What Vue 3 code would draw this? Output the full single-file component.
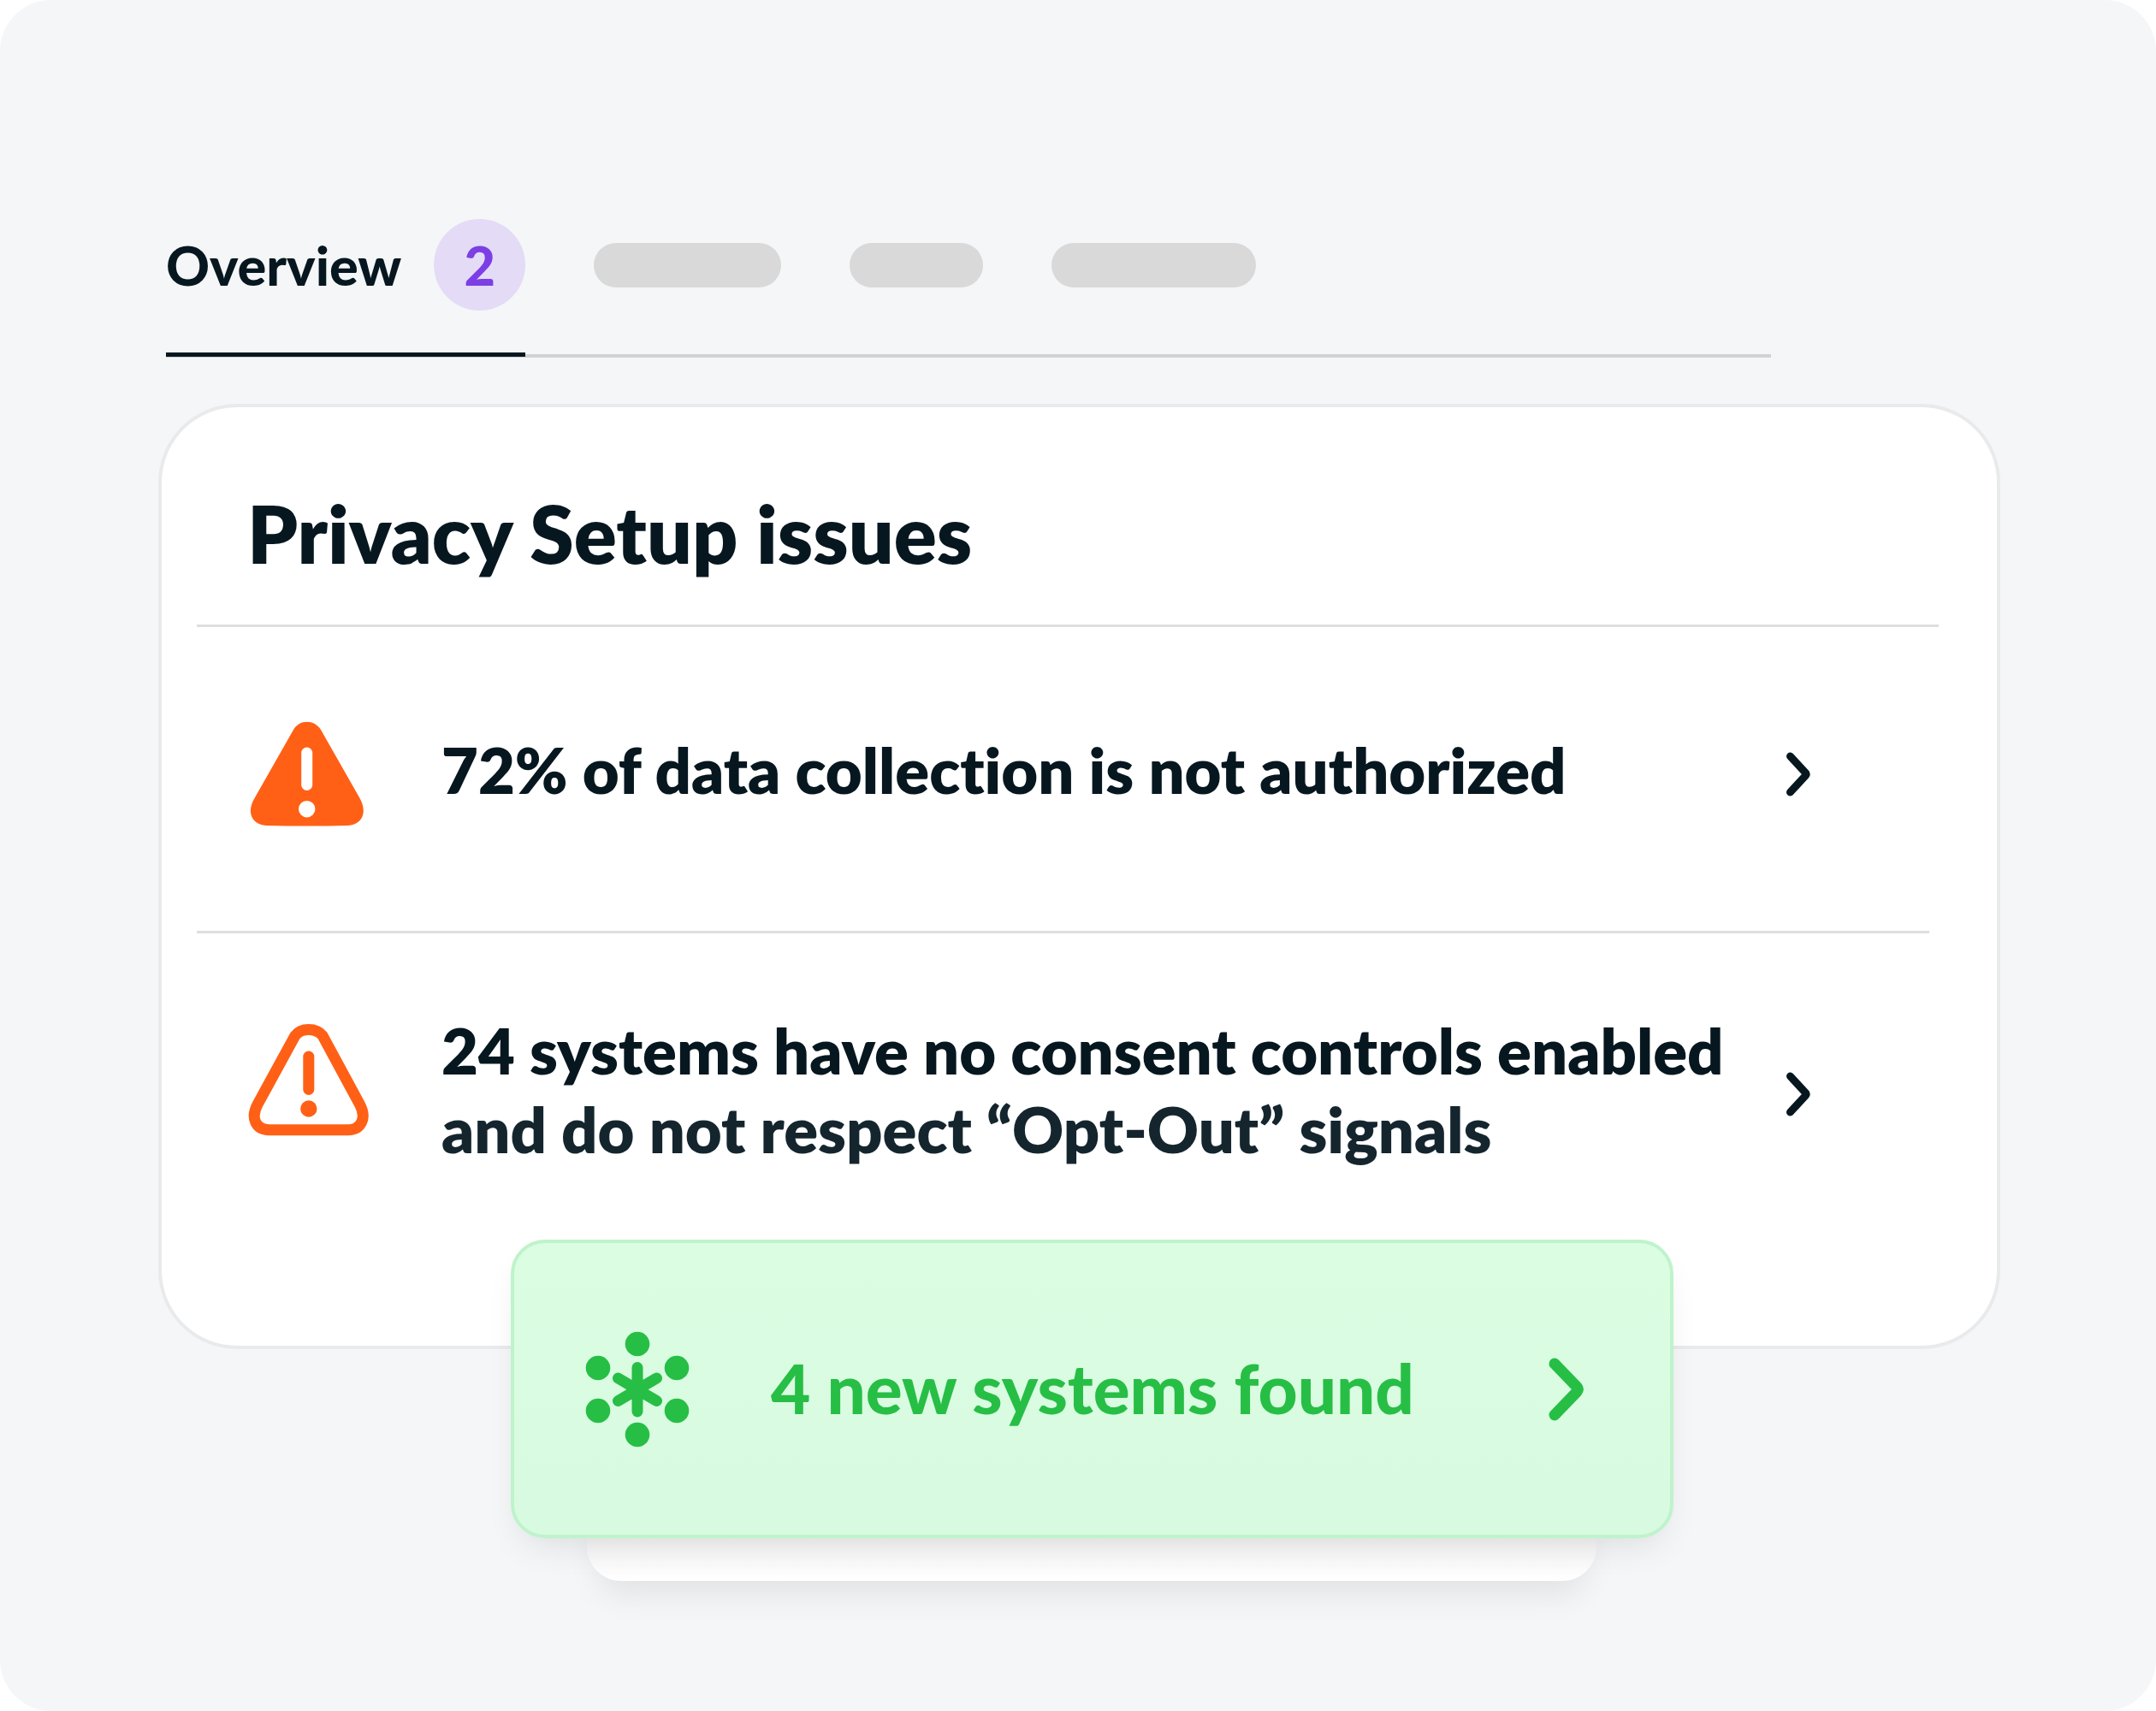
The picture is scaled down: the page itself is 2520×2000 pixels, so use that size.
<script setup>
import { ref } from 'vue'

const activeTab = ref('overview')
const placeholders = ['medium', 'short', 'long']
const issues = [
  { id: 'collection', solid: true, lines: ['72% of data collection is not authorized'] },
  {
    id: 'consent',
    solid: false,
    lines: ['24 systems have no consent controls enabled', 'and do not respect “Opt-Out” signals'],
  },
]
</script>

<template>
  <main class="frame">
    <nav class="tabs" aria-label="Sections">
      <button type="button" class="tab" :aria-pressed="activeTab === 'overview'" @click="activeTab = 'overview'">
        <span>Overview</span>
        <span class="badge">2</span>
      </button>
      <div class="placeholders">
        <span v-for="size in placeholders" :key="size" class="pill" :class="size"></span>
      </div>
    </nav>

    <section class="card">
      <h2 class="title">Privacy Setup issues</h2>
      <ul class="issues">
        <li v-for="issue in issues" :key="issue.id">
          <button type="button" class="issue" :class="{ outlined: !issue.solid }">
            <svg v-if="issue.solid" class="warning" viewBox="0 0 140 130" aria-hidden="true">
              <path fill="#ff6016" d="M53 13C60 .6 77.500 .6 85 13L130.500 93C141 112 131 124.500 116 125Q69 126 22 125C7 124.500-3.500 112 7.500 93Z" />
              <path stroke="#fff" stroke-width="13" stroke-linecap="round" d="M68.700 40V77.500" />
              <circle fill="#fff" cx="68.700" cy="105.700" r="9.700" />
            </svg>
            <svg v-else class="warning" viewBox="0 0 140 130" aria-hidden="true">
              <path fill="none" stroke="#ff6016" stroke-width="13" d="M55 12.500C62 3 79.500 3 87 12.500L130.500 93C139 109 132 122.500 117 122.800H24.500C9 122.500 2.500 109 11 93Z" />
              <path stroke="#ff6016" stroke-width="13" stroke-linecap="round" d="M70.800 37V75.500" />
              <circle fill="#ff6016" cx="70.800" cy="98" r="9.700" />
            </svg>
            <span class="message">
              <span v-for="line in issue.lines" :key="line" class="line">{{ line }}</span>
            </span>
            <svg class="chevron" viewBox="0 0 40 60" aria-hidden="true">
              <path d="M10.500 9 28.500 28.500Q30 30 28.500 31.500L10.500 51" />
            </svg>
          </button>
        </li>
      </ul>
    </section>

    <div class="stack">
      <div class="sheet"></div>
      <button type="button" class="toast">
        <svg class="hub" viewBox="0 0 122 136" aria-hidden="true">
          <g fill="currentColor">
            <circle cx="60" cy="15" r="14.300" />
            <circle cx="60" cy="121" r="14.300" />
            <circle cx="14" cy="43" r="14.300" />
            <circle cx="106" cy="43" r="14.300" />
            <circle cx="14" cy="93" r="14.300" />
            <circle cx="106" cy="93" r="14.300" />
          </g>
          <path d="M60 42.500V94M37.500 55 82.500 81.500M82.500 55 37.500 81.500" />
        </svg>
        <span class="toast-text">4 new systems found</span>
        <svg class="chevron-large" viewBox="0 0 50 80" aria-hidden="true">
          <path d="M10 10 36 37Q38.500 40 36 43L10 70" />
        </svg>
      </button>
    </div>
  </main>
</template>

<style>
body {
  margin: 0;
  background: #fff;
}
</style>

<style scoped>
.frame {
  box-sizing: border-box;
  min-height: 100vh;
  padding: 256px 182px 150px 185px;
  border-radius: 60px;
  background: #f4f6f8;
  color: #07171f;
  font-family: Lato, "Open Sans", sans-serif;
  font-weight: 800;
  font-variant-ligatures: none;
}

button {
  margin: 0;
  padding: 0;
  border: 0;
  background: none;
  color: inherit;
  font: inherit;
  font-variant-ligatures: none;
  text-align: left;
  cursor: pointer;
}

svg {
  display: block;
  flex: none;
  overflow: visible;
}

.tabs {
  display: flex;
  align-items: flex-start;
  gap: 80px;
  margin: 0 268px 0 9px;
  border-bottom: 4px solid #d0d2d4;
}

.tab {
  display: flex;
  align-items: center;
  gap: 38px;
  margin-bottom: -3px;
  padding-bottom: 49px;
  border-bottom: 5px solid #07171f;
  font-size: 63px;
  font-weight: 900;
  line-height: 76px;
}

.badge {
  width: 107px;
  border-radius: 50%;
  background: #e4dbf7;
  color: #7b3fe4;
  line-height: 107px;
  text-align: center;
}

.placeholders {
  display: flex;
  align-items: center;
  gap: 80px;
  height: 107px;
}

.pill {
  height: 52px;
  border-radius: 26px;
  background: #d9d9d9;
}

.medium {
  width: 219px;
}

.short {
  width: 156px;
}

.long {
  width: 239px;
}

.card {
  margin-top: 54px;
  padding: 97px 68px 0 41px;
  border: 4px solid #e8eaeb;
  border-radius: 92px;
  background: #fff;
}

.title {
  margin: 0;
  padding: 0 0 57px 59px;
  border-bottom: 3px solid #dedede;
  font-size: 93px;
  font-weight: 800;
  line-height: 100px;
}

.issues {
  margin: 0 11px 0 0;
  padding: 0;
  list-style: none;
}

.issues li + li {
  border-top: 3px solid #dedede;
}

.issue {
  display: flex;
  align-items: center;
  width: 100%;
  padding: 107px 133px 118px 60px;
}

.outlined {
  padding-top: 91px;
  padding-bottom: 197px;
}

.warning {
  width: 140px;
  height: 130px;
  margin-right: 86px;
}

.outlined .warning {
  align-self: flex-start;
  margin-top: 16px;
}

.message {
  flex: 1;
  padding-bottom: 10px;
  font-size: 74px;
  line-height: 92px;
  white-space: nowrap;
}

.line {
  display: block;
}

.line + .line {
  color: #14252e;
}

.chevron {
  width: 40px;
  height: 60px;
}

.chevron path {
  fill: none;
  stroke: currentColor;
  stroke-width: 9;
  stroke-linecap: round;
  stroke-linejoin: round;
}

.stack {
  position: relative;
  margin: -128px 382px 0 412px;
}

.sheet {
  position: absolute;
  right: 90px;
  bottom: -50px;
  left: 89px;
  height: 120px;
  border-radius: 40px;
  background: linear-gradient(#f2f2f2 50%, #fff);
  box-shadow: 0 28px 36px -12px rgba(0, 0, 0, 0.08);
}

.toast {
  position: relative;
  display: flex;
  align-items: center;
  box-sizing: border-box;
  width: 100%;
  height: 349px;
  padding: 0 95px 0 84px;
  border: 4px solid #bff3cb;
  border-radius: 40px;
  background: linear-gradient(#dbfee3, #d7fae0);
  box-shadow: 0 20px 40px -12px rgba(0, 0, 0, 0.1);
  color: #27be45;
  font-size: 80px;
  font-weight: 900;
  line-height: 96px;
}

.hub {
  width: 122px;
  height: 136px;
  margin-right: 94px;
}

.toast-text {
  flex: 1;
  padding-bottom: 4px;
  white-space: nowrap;
}

.chevron-large {
  width: 50px;
  height: 80px;
}

.hub path,
.chevron-large path {
  fill: none;
  stroke: currentColor;
  stroke-width: 13;
  stroke-linecap: round;
  stroke-linejoin: round;
}
</style>
